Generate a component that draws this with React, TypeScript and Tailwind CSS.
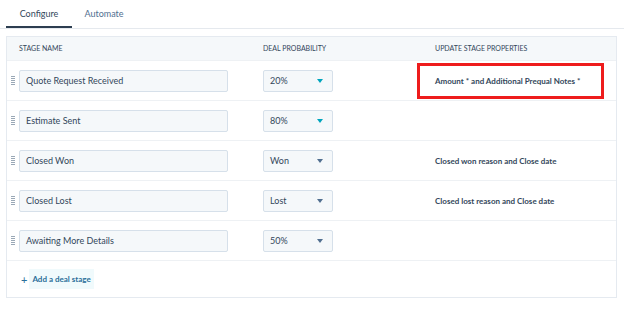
import React from "react";

const rows = [
  { name: "Quote Request Received", prob: "20%", props: "Amount * and Additional Prequal Notes *", highlight: true, teal: true },
  { name: "Estimate Sent", prob: "80%", props: "", teal: true },
  { name: "Closed Won", prob: "Won", props: "Closed won reason and Close date" },
  { name: "Closed Lost", prob: "Lost", props: "Closed lost reason and Close date" },
  { name: "Awaiting More Details", prob: "50%", props: "" },
];

function Handle() {
  return (
    <div className="flex w-[4px] flex-col gap-[1px]">
      {[0, 1, 2, 3, 4].map((i) => (
        <div key={i} className="h-[1px] w-[4px] bg-[#9aa8b6]" />
      ))}
    </div>
  );
}

export default function App() {
  return (
    <div className="h-[312px] w-[624px] bg-white text-[#33475b]" style={{ fontFamily: "Lato, 'Noto Sans', sans-serif" }}>
      <div className="flex h-[29px] border-b border-[#e5e9ee] pl-[6px]">
        <div className="flex w-[66px] flex-col items-center justify-end">
          <span className="pb-[6px] text-[9px] text-[#33475b]">Configure</span>
          <div className="h-[2px] w-full bg-[#2d3e50]" />
        </div>
        <div className="flex w-[64px] flex-col items-center justify-end">
          <span className="pb-[8px] text-[9px] text-[#516f90]">Automate</span>
        </div>
      </div>
      <div className="ml-[6px] mt-[7px] w-[611px] border border-[#e5eaf0] bg-white">
        <div className="flex h-[23px] items-center bg-[#f5f8fa] text-[7px] uppercase text-[#33475b]">
          <div className="w-[256px] pl-[12px]">Stage name</div>
          <div className="w-[172px]">Deal probability</div>
          <div>Update stage properties</div>
        </div>
        {rows.map((r, i) => (
          <div key={i} className="flex h-[40px] items-center border-t border-[#eef1f4]">
            <div className="flex w-[256px] items-center">
              <div className="ml-[4px] mr-[4px]"><Handle /></div>
              <div className="flex h-[22px] w-[209px] items-center rounded-[2px] border border-[#d6e0ea] bg-[#f5f8fa] pl-[6px] text-[9px] text-[#33475b]">
                {r.name}
              </div>
            </div>
            <div className="flex w-[154px] items-center">
              <div className="flex h-[22px] w-[70px] items-center justify-between rounded-[2px] border border-[#d6e0ea] bg-[#f5f8fa] pl-[6px] pr-[9px] text-[9px] text-[#33475b]">
                <span>{r.prob}</span>
                <svg width="6" height="4" viewBox="0 0 6 4"><path d="M0 0H6L3 4Z" fill={r.teal ? "#00a4bd" : "#516f90"} /></svg>
              </div>
            </div>
            <div className="flex flex-1 items-center">
              {r.highlight ? (
                <div className="flex h-[36px] w-[187px] items-center border-[3px] border-[#ee1c1c] pl-[15px] text-[8px] font-bold text-[#33475b]">
                  {r.props}
                </div>
              ) : (
                <div className="pl-[18px] text-[8px] font-bold text-[#33475b]">{r.props}</div>
              )}
            </div>
          </div>
        ))}
        <div className="flex h-[37px] items-center border-t border-[#eef1f4] pl-[14px]">
          <div className="flex items-center text-[8px] font-bold text-[#2b6f9a]">
            <span className="pr-[2px] text-[11px] font-normal leading-none">+</span>
            <span className="bg-[#f0fafc] px-[3px] py-[4px]">Add a deal stage</span>
          </div>
        </div>
      </div>
    </div>
  );
}
